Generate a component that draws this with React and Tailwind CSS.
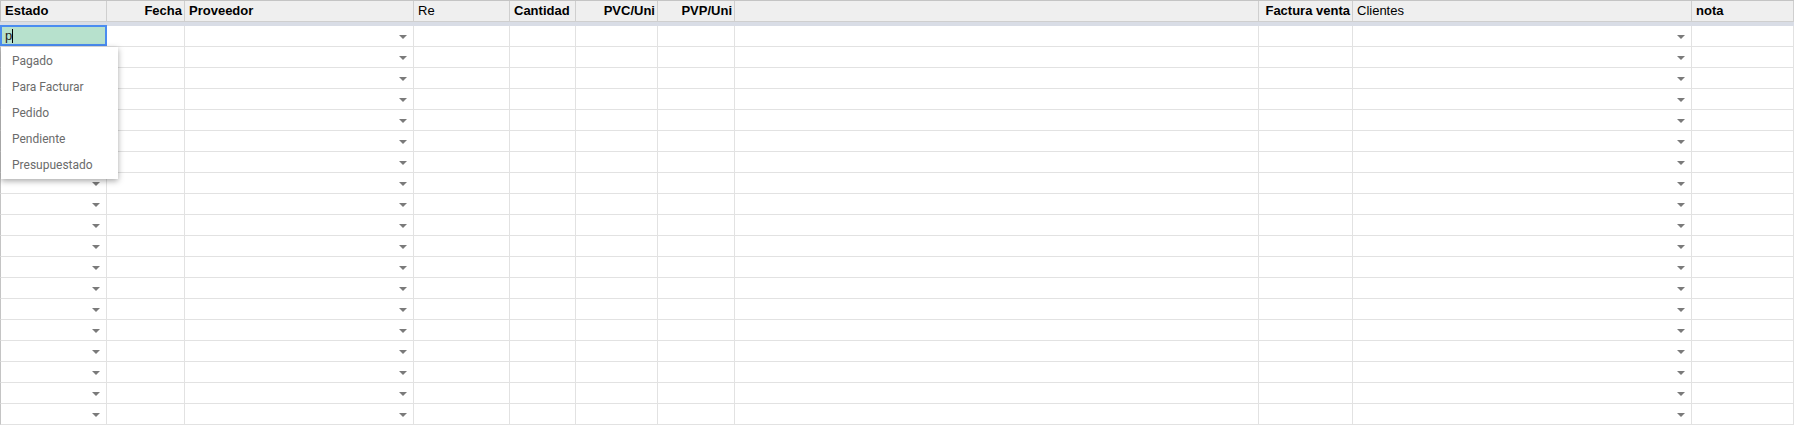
import React from "react";

const cols = [
  { k: "estado", l: "Estado", bold: true, align: "left", arrow: true },
  { k: "fecha", l: "Fecha", bold: true, align: "right" },
  { k: "proveedor", l: "Proveedor", bold: true, align: "left", arrow: true },
  { k: "re", l: "Re", bold: false, align: "left" },
  { k: "cantidad", l: "Cantidad", bold: true, align: "left" },
  { k: "pvc", l: "PVC/Uni", bold: true, align: "right" },
  { k: "pvp", l: "PVP/Uni", bold: true, align: "right" },
  { k: "blank", l: "", bold: false, align: "left" },
  { k: "factura", l: "Factura venta", bold: true, align: "right" },
  { k: "clientes", l: "Clientes", bold: false, align: "left", arrow: true },
  { k: "nota", l: "nota", bold: true, align: "left" },
];

const estados = ["Pagado", "Para Facturar", "Pedido", "Pendiente", "Presupuestado"];

const gridCols = "grid grid-cols-[107px_78px_229px_96px_66px_82px_77px_524px_94px_339px_102px]";

const Arrow = () => (
  <span className="absolute right-[6px] top-[9px] w-0 h-0 border-l-[4px] border-r-[4px] border-t-[4px] border-l-transparent border-r-transparent border-t-[#7a7a7a]" />
);

export default function App() {
  const rows = Array.from({ length: 19 }, (_, i) => i);
  return (
    <div className="relative w-[1794px] h-[425px] overflow-hidden bg-white font-['Liberation_Sans',Arial,sans-serif] text-[13px] text-black">
      {/* header */}
      <div className={`${gridCols} h-[22px] border-t border-[#c4c4c4] bg-[#efefef]`}>
        {cols.map((c, i) => (
          <div
            key={c.k}
            className={`h-[21px] leading-[20px] whitespace-nowrap overflow-hidden border-r border-b border-[#cfcfcf] ${i === 0 ? "border-l border-l-[#c0c0c0]" : ""} ${c.bold ? "font-bold" : ""} ${c.align === "right" ? "text-right pr-[2px] pl-[3px]" : "text-left pl-[4px] pr-[2px]"}`}
          >
            {c.l}
          </div>
        ))}
      </div>
      <div className="h-[4px] bg-[#d9dde6]" />

      {/* rows */}
      {rows.map((r) => (
        <div key={r} className={`${gridCols} h-[21px]`}>
          {cols.map((c, i) => (
            <div
              key={c.k}
              className={`relative h-[21px] border-r border-b border-[#e2e2e2] ${i === 0 ? "border-l border-l-[#c4c4c4]" : ""}`}
            >
              {c.arrow && !(r === 0 && c.k === "estado") && <Arrow />}
              {r === 0 && c.k === "estado" && (
                <div className="absolute -left-px -top-px w-[107px] h-[21px] border-2 border-[#4a8cf0] bg-[#b7e1cd] pl-[3px] leading-[17px] flex items-center">
                  <span className="text-[13px] text-[#222]">p</span>
                  <span className="w-px h-[14px] bg-black" />
                </div>
              )}
            </div>
          ))}
        </div>
      ))}

      {/* dropdown */}
      <div className="absolute left-[1px] top-[47px] w-[117px] bg-white shadow-[0_2px_6px_rgba(0,0,0,0.35)] py-px font-['Roboto',Arial,sans-serif]">
        {estados.map((e) => (
          <div key={e} className="h-[26px] leading-[26px] pl-[11px] text-[12px] text-[#6b6b6b]">
            {e}
          </div>
        ))}
      </div>
    </div>
  );
}
